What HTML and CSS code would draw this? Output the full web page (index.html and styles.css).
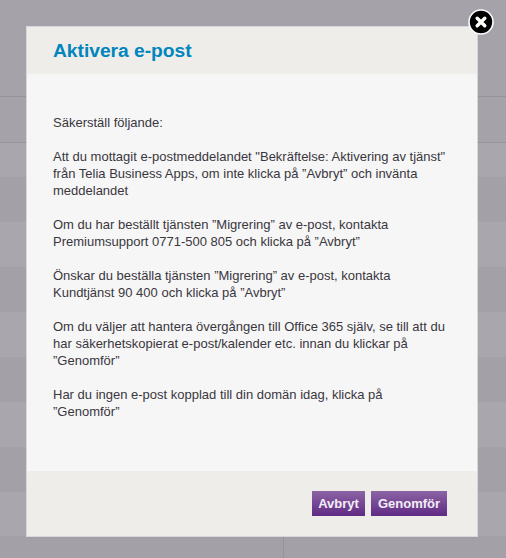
FILE: index.html
```html
<!DOCTYPE html>
<html lang="sv">
<head>
<meta charset="utf-8">
<title>Aktivera e-post</title>
<link rel="stylesheet" href="styles.css">
</head>
<body>
<div class="page">
  <div class="top-band"></div>
  <div class="head-row"></div>
  <div class="row light short"></div>
  <div class="row dark"></div>
  <div class="row light"></div>
  <div class="row dark"></div>
  <div class="row light"></div>
  <div class="row dark"></div>
  <div class="row light"></div>
  <div class="row dark"></div>
  <div class="row light short2"></div>
  <div class="foot-row"><div class="foot-cell"></div></div>
</div>
<div class="modal">
  <header class="modal-head"><h1 class="modal-title">Aktivera e-post</h1></header>
  <div class="modal-body">
    <p>Säkerställ följande:</p>
    <p>Att du mottagit e-postmeddelandet "Bekräftelse: Aktivering av tjänst"<br>från Telia Business Apps, om inte klicka på ”Avbryt” och invänta<br>meddelandet</p>
    <p>Om du har beställt tjänsten ”Migrering” av e-post, kontakta<br>Premiumsupport 0771-500 805 och klicka på ”Avbryt”</p>
    <p>Önskar du beställa tjänsten ”Migrering” av e-post, kontakta<br>Kundtjänst 90 400 och klicka på ”Avbryt”</p>
    <p>Om du väljer att hantera övergången till Office 365 själv, se till att du<br>har säkerhetskopierat e-post/kalender etc. innan du klickar på<br>”Genomför”</p>
    <p>Har du ingen e-post kopplad till din domän idag, klicka på<br>”Genomför”</p>
  </div>
  <footer class="modal-foot">
    <button class="btn" type="button">Avbryt</button>
    <button class="btn btn-wide" type="button">Genomför</button>
  </footer>
  <button class="close" type="button" aria-label="Stäng">
    <svg viewBox="0 0 26 26" width="26" height="26"><circle cx="13" cy="13" r="12" fill="#000" stroke="#fff" stroke-width="1.6"/><path d="M9.2 9.2l7.6 7.6M16.8 9.2l-7.6 7.6" stroke="#fff" stroke-width="3.4" stroke-linecap="round"/></svg>
  </button>
</div>
</body>
</html>
```
FILE: styles.css
```css
html, body { margin: 0; padding: 0; height: 100%; overflow: hidden; }
body { background: #a5a2a9; font-family: "Liberation Sans", Arial, sans-serif; position: relative; }
.page { display: flex; flex-direction: column; height: 558px; }
.top-band { height: 96px; flex: none; background: #a5a2a9; border-bottom: 1px solid #96939a; }
.head-row { height: 45px; flex: none; background: #a5a2a9; border-bottom: 1px solid #96939a; }
.row { height: 45px; flex: none; }
.row.short { height: 34px; }
.row.short2 { height: 44px; }
.light { background: #a9a6ad; }
.dark { background: #a3a0a7; }
.foot-row { flex: 1; background: #a3a0a7; padding-left: 283px; }
.foot-cell { height: 100%; border-left: 1px solid #96939a; }
.modal { position: absolute; left: 26px; top: 26px; width: 452px; height: 511px; box-sizing: border-box; border: 1px solid #d8d7d9; display: flex; flex-direction: column; background: #f6f6f6; }
.modal-head { height: 47px; flex: none; background: #eeede9; padding: 0 26px; display: flex; align-items: center; }
.modal-title { margin: 0; font-size: 19.2px; font-weight: bold; color: #0085bd; }
.modal-body { flex: 1; padding: 40px 26px 0; font-size: 13px; line-height: 17px; color: #3a3640; }
.modal-body p { margin: 0 0 17px; }
.modal-foot { height: 65px; flex: none; background: #eeede9; display: flex; justify-content: flex-end; align-items: flex-start; gap: 6px; padding: 20px 30px 0 0; box-sizing: border-box; }
.btn { height: 25px; border: 0; padding: 0; width: 53px; background: linear-gradient(#8c64a4, #5f2a84); color: #f3eef6; font: bold 13px "Liberation Sans", Arial, sans-serif; }
.btn-wide { width: 76px; }
.close { position: absolute; right: -17px; top: -18px; width: 26px; height: 26px; padding: 0; border: 0; background: none; }
.close svg { display: block; }
```
